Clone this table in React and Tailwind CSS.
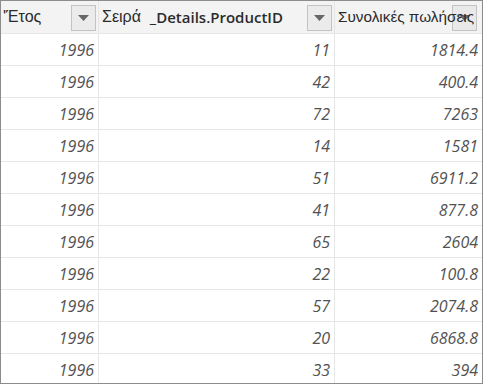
import React from 'react';

const rows = [
    ['1996', '11', '1814.4'],
    ['1996', '42', '400.4'],
    ['1996', '72', '7263'],
    ['1996', '14', '1581'],
    ['1996', '51', '6911.2'],
    ['1996', '41', '877.8'],
    ['1996', '65', '2604'],
    ['1996', '22', '100.8'],
    ['1996', '57', '2074.8'],
    ['1996', '20', '6868.8'],
    ['1996', '33', '394'],
];

const FilterButton = ({ className = '' }) => (
    <div className={`absolute top-[4px] w-[25px] h-[26px] border border-[#c3c3c3] flex items-center justify-center ${className}`}>
        <svg width="11" height="6" viewBox="0 0 11 6">
            <path d="M0 0 H11 L5.5 6 Z" fill="#666" />
        </svg>
    </div>
);

const App = () => {
    return (
        <div className="w-[483px] h-[384px] border border-[#8c8c8c] bg-white overflow-hidden" style={{ fontFamily: '"Liberation Sans", Arial, sans-serif' }}>
            <div className="grid grid-cols-[98px_236px_1fr] h-[32px] bg-[#f3f3f3] text-[16px] text-[#2b2b2b]">
                <div className="relative border-r border-[#e6e6e6] flex items-center pl-[2px]">
                    <span>'Έτος</span>
                    <FilterButton className="left-[70px] bg-[#ebebeb]" />
                </div>
                <div className="relative border-r border-[#e6e6e6] flex items-center pl-[3px] whitespace-nowrap">
                    <span>Σειρά&nbsp;&nbsp;</span>
                    <span className="font-semibold text-[15px]" style={{ fontFamily: '"Open Sans", sans-serif' }}>_Details.ProductID</span>
                    <FilterButton className="left-[208px] bg-[#ebebeb]" />
                </div>
                <div className="relative flex items-center pl-[3px] whitespace-nowrap overflow-hidden">
                    <FilterButton className="left-[117px] bg-[#e9e9e9]" />
                    <span className="relative text-[15.3px]">Συνολικές πωλήσεις</span>
                </div>
            </div>
            {rows.map((r, idx) => (
                <div
                    key={idx}
                    className="grid grid-cols-[98px_236px_1fr] h-[32px] border-t border-[#e6e6e6] text-[16px] italic font-medium text-[#525252]"
                    style={{ fontFamily: '"Open Sans", sans-serif' }}
                >
                    <div className="border-r border-[#e6e6e6] flex items-center justify-end pr-[4px]">{r[0]}</div>
                    <div className="border-r border-[#e6e6e6] flex items-center justify-end pr-[4px]">{r[1]}</div>
                    <div className="flex items-center justify-end pr-[4px]">{r[2]}</div>
                </div>
            ))}
        </div>
    );
};

export default App;
